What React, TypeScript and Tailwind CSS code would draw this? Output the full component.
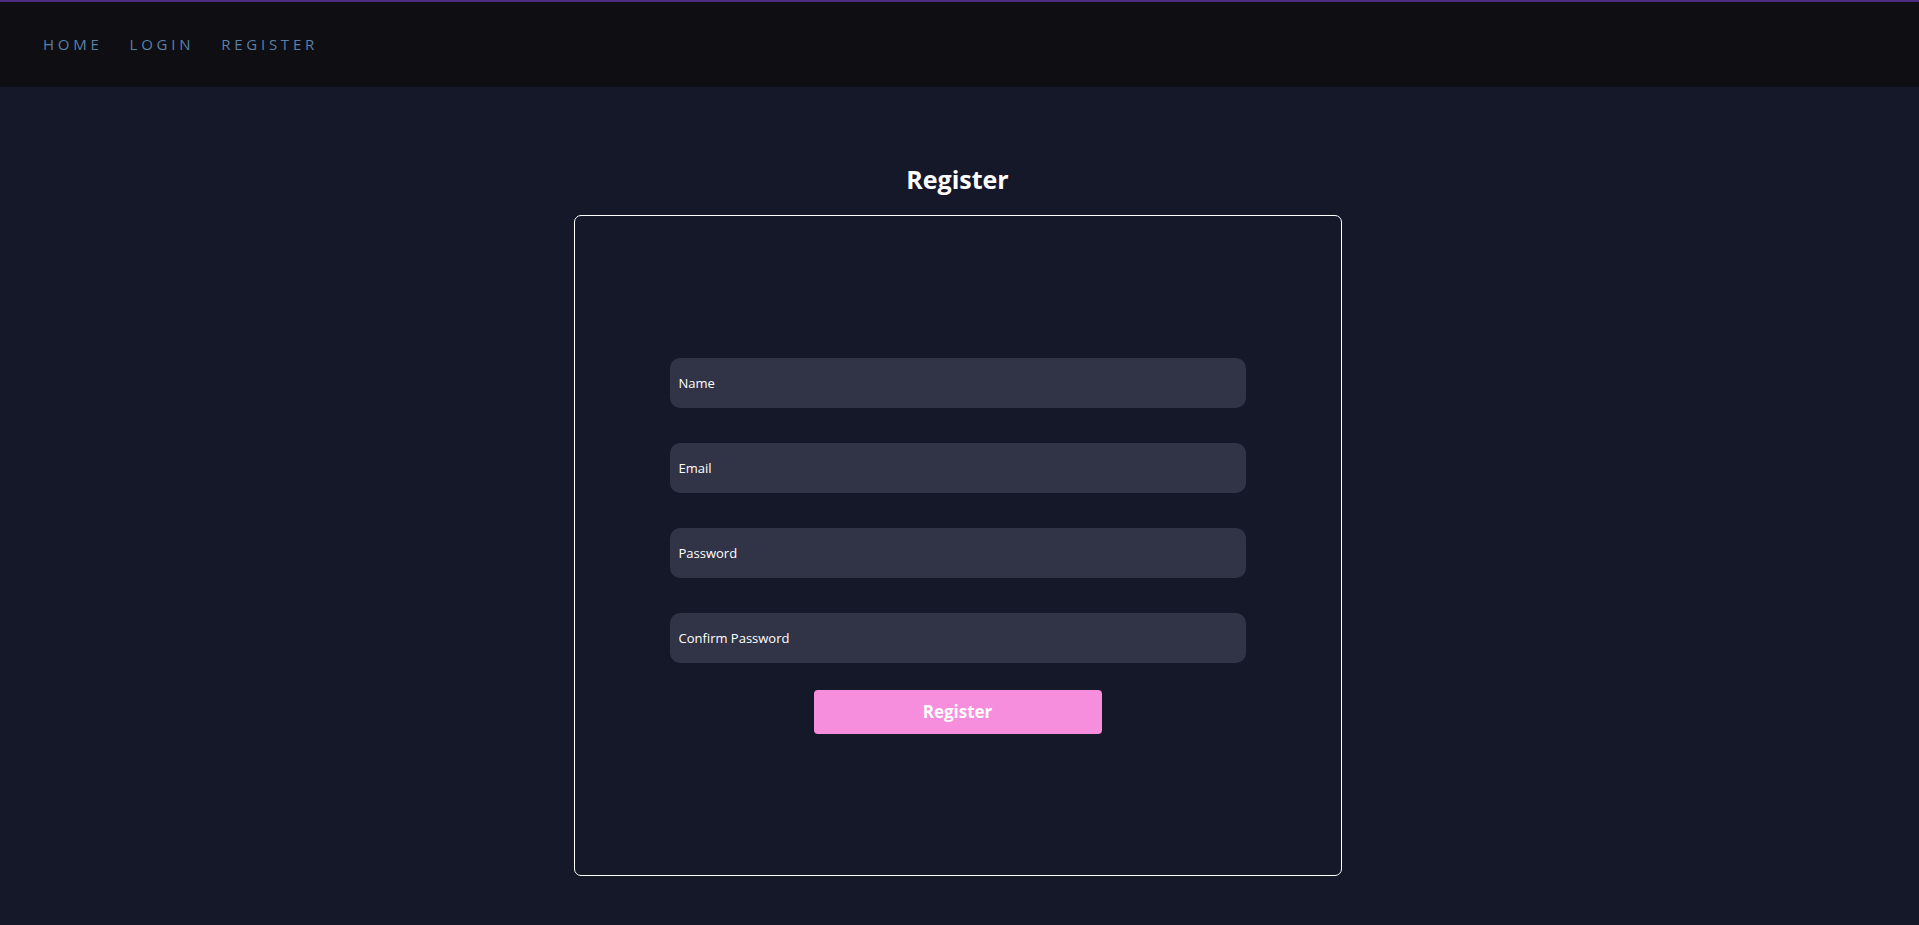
import React from "react"

const navLinks = ["HOME", "LOGIN", "REGISTER"]
const fields = ["Name", "Email", "Password", "Confirm Password"]

export default function App() {
  return (
    <div
      className="min-h-screen bg-[#151829] flex flex-col"
      style={{ fontFamily: '"Open Sans", "Noto Sans", sans-serif' }}
    >
      <nav className="h-[87px] bg-[#0e0e13] border-t-2 border-[#4b2d82] flex items-center pl-[43px] gap-[27px]">
        {navLinks.map((link) => (
          <a
            key={link}
            href="#"
            className="text-[15px] tracking-[0.25em] text-[#5a80a6] leading-none"
          >
            {link}
          </a>
        ))}
      </nav>

      <main className="flex flex-col items-center pt-[76px] pr-[4px]">
        <h2 className="text-[25px] font-bold text-white leading-[32px] mb-[20px]">Register</h2>

        <div className="w-[768px] h-[661px] border border-white rounded-[7px] flex flex-col items-center justify-center">
          <form className="w-[576px] flex flex-col items-center">
            <div className="w-full flex flex-col gap-[35px]">
              {fields.map((field) => (
                <input
                  key={field}
                  type="text"
                  placeholder={field}
                  className="w-full h-[50px] rounded-[10px] bg-[#313347] px-[9px] text-[13px] text-white placeholder:text-white outline-none"
                />
              ))}
            </div>
            <button
              type="button"
              className="mt-[27px] w-[288px] h-[44px] rounded-[4px] bg-[#f78ddd] text-white text-[17px] font-bold"
            >
              Register
            </button>
          </form>
        </div>
      </main>
    </div>
  )
}
